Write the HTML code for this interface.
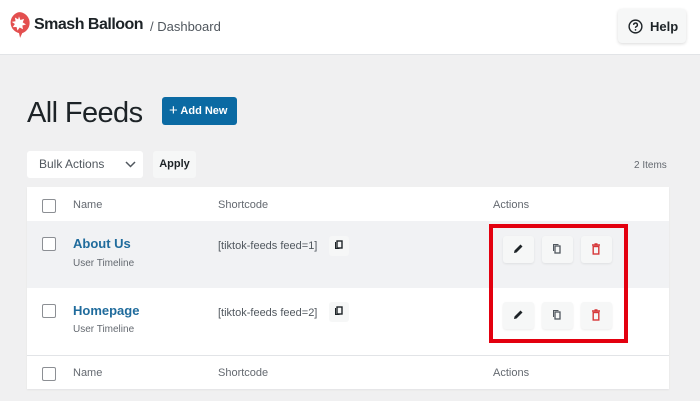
<!DOCTYPE html><html><head><style>
*{margin:0;padding:0;box-sizing:border-box}
body{width:700px;height:401px;background:#f0f0f1;font-family:"Liberation Sans",sans-serif;position:relative;overflow:hidden;color:#1d2327}
.a{position:absolute}
.hdr{left:0;top:0;width:700px;height:55px;background:#fff;border-bottom:1px solid #e2e4e7}
.cb{position:absolute;width:14px;height:14px;border:1px solid #8c8f94;background:#fff;border-radius:2px}
.th{font-size:11px;color:#646970}
.btn{position:absolute;width:31px;height:27px;background:#f6f7f7;border-radius:3px;box-shadow:0 1px 2px rgba(0,0,0,.08)}
.btn svg{position:absolute;left:8px;top:6px}
</style></head><body>
<div class="a hdr"></div>
<svg class="a" style="left:7px;top:11px" width="24" height="28" viewBox="0 0 22 26"><path d="M11 1a10 10 0 0 1 3 19.5L12 25l-1-4.5A10 10 0 0 1 11 1z" fill="#e34f4f"/><path d="M11 5l1.3 3.3 3.4-1-1.2 3.3 3 1.9-3.4 1 .6 3.5-3.1-1.7-2 2.9-.9-3.4-3.5.2 2-2.9-2.9-2 3.5-.6-.6-3.5 3 1.8z" fill="#fff"/></svg>
<div class="a" style="left:34px;top:16px;font-size:16px;font-weight:bold;color:#1d2327;letter-spacing:-.5px">Smash Balloon</div>
<div class="a" style="left:150px;top:19px;font-size:13px;color:#50575e">/ Dashboard</div>
<div class="a" style="left:618px;top:9px;width:68px;height:34px;background:#f6f7f7;border-radius:4px;box-shadow:0 1px 3px rgba(0,0,0,.15)"></div>
<svg class="a" style="left:628px;top:19px" width="15" height="15" viewBox="0 0 16 16"><circle cx="8" cy="8" r="6.8" fill="none" stroke="#1d2327" stroke-width="1.5"/><path d="M6 6.3a2 2 0 1 1 2.8 1.8c-.6.3-.8.7-.8 1.3" fill="none" stroke="#1d2327" stroke-width="1.5"/><circle cx="8" cy="11.6" r=".9" fill="#1d2327"/></svg>
<div class="a" style="left:650px;top:19px;font-size:13px;font-weight:bold">Help</div>
<div class="a" style="left:27px;top:97px;font-size:29px;color:#1d2327;letter-spacing:-.6px">All Feeds</div>
<div class="a" style="left:162px;top:97px;width:75px;height:28px;background:#0b6aa3;border-radius:3px;color:#fff;font-size:11px;font-weight:bold;line-height:28px;padding-left:7px"><span style="font-size:15px;font-weight:normal;vertical-align:-1px">+</span> Add New</div>
<div class="a" style="left:27px;top:151px;width:116px;height:27px;background:#fff;border-radius:3px;font-size:12px;color:#50575e;line-height:27px;padding-left:12px">Bulk Actions<svg style="position:absolute;right:7px;top:10px" width="11" height="7" viewBox="0 0 11 7"><path d="M1 1l4.5 4.5L10 1" fill="none" stroke="#50575e" stroke-width="1.5"/></svg></div>
<div class="a" style="left:153px;top:151px;width:43px;height:27px;background:#f6f7f7;border-radius:3px;font-size:11px;font-weight:bold;line-height:27px;text-align:center">Apply</div>
<div class="a" style="left:634px;top:160px;font-size:10px;color:#646970">2 Items</div>
<div class="a" style="left:27px;top:187px;width:642px;height:202px;background:#fff;box-shadow:0 1px 2px rgba(0,0,0,.06)">
<div class="a" style="left:0;top:34px;width:642px;height:67px;background:#f1f2f4"></div>
<div class="a" style="left:0;top:168px;width:642px;height:1px;background:#e2e4e7"></div>
<div class="cb" style="left:15px;top:12px"></div><div class="a th" style="left:46px;top:12px">Name</div><div class="a th" style="left:191px;top:12px">Shortcode</div><div class="a th" style="left:466px;top:12px">Actions</div>
<div class="cb" style="left:15px;top:50px"></div><div class="a" style="left:46px;top:49px;font-size:13px;color:#1f6b9c;font-weight:bold">About Us</div><div class="a" style="left:46px;top:71px;font-size:10px;color:#646970">User Timeline</div><div class="a" style="left:191px;top:53px;font-size:11px;color:#50575e">[tiktok-feeds feed=1]</div>
<div class="cb" style="left:15px;top:117px"></div><div class="a" style="left:46px;top:116px;font-size:13px;color:#1f6b9c;font-weight:bold">Homepage</div><div class="a" style="left:46px;top:137px;font-size:10px;color:#646970">User Timeline</div><div class="a" style="left:191px;top:120px;font-size:11px;color:#50575e">[tiktok-feeds feed=2]</div>
<div class="cb" style="left:15px;top:180px"></div><div class="a th" style="left:46px;top:180px">Name</div><div class="a th" style="left:191px;top:180px">Shortcode</div><div class="a th" style="left:466px;top:180px">Actions</div>
</div>
<svg class="a" style="left:329px;top:236px" width="20" height="20" viewBox="0 0 20 20"><rect width="20" height="20" rx="3" fill="#f6f7f7"/><rect x="8" y="5" width="5" height="7" fill="none" stroke="#1d2327" stroke-width="1.4"/><path d="M6.5 6v6.5h4" fill="none" stroke="#1d2327" stroke-width="1"/></svg>
<svg class="a" style="left:329px;top:302px" width="20" height="20" viewBox="0 0 20 20"><rect width="20" height="20" rx="3" fill="#f6f7f7"/><rect x="8" y="5" width="5" height="7" fill="none" stroke="#1d2327" stroke-width="1.4"/><path d="M6.5 6v6.5h4" fill="none" stroke="#1d2327" stroke-width="1"/></svg>
<div class="a" style="left:489px;top:224px;width:139px;height:119px;border:4px solid #e3000f"></div>
<div class="btn" style="left:503px;top:236px"><svg width="14" height="14" viewBox="0 0 14 14"><path d="M3 11l.5-2.5 6-6 2 2-6 6z" fill="#1d2327"/></svg></div>
<div class="btn" style="left:542px;top:236px"><svg width="14" height="14" viewBox="0 0 14 14"><rect x="5" y="4" width="5" height="7" fill="none" stroke="#50575e" stroke-width="1.3"/><path d="M3.5 9V2.5h5" fill="none" stroke="#50575e" stroke-width="1"/></svg></div>
<div class="btn" style="left:581px;top:236px"><svg width="14" height="14" viewBox="0 0 14 14"><path d="M3 3h8M5.5 2h3" stroke="#d63638" stroke-width="1.4"/><rect x="4.2" y="4.5" width="5.6" height="7.5" fill="none" stroke="#d63638" stroke-width="1.4"/></svg></div>
<div class="btn" style="left:503px;top:302px"><svg width="14" height="14" viewBox="0 0 14 14"><path d="M3 11l.5-2.5 6-6 2 2-6 6z" fill="#1d2327"/></svg></div>
<div class="btn" style="left:542px;top:302px"><svg width="14" height="14" viewBox="0 0 14 14"><rect x="5" y="4" width="5" height="7" fill="none" stroke="#50575e" stroke-width="1.3"/><path d="M3.5 9V2.5h5" fill="none" stroke="#50575e" stroke-width="1"/></svg></div>
<div class="btn" style="left:581px;top:302px"><svg width="14" height="14" viewBox="0 0 14 14"><path d="M3 3h8M5.5 2h3" stroke="#d63638" stroke-width="1.4"/><rect x="4.2" y="4.5" width="5.6" height="7.5" fill="none" stroke="#d63638" stroke-width="1.4"/></svg></div>
</body></html>
